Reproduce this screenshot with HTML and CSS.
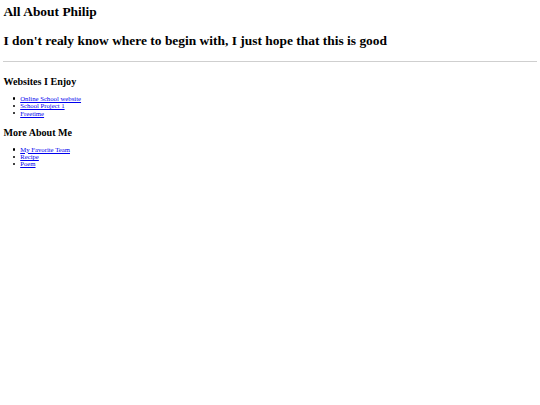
FILE: index.html
```html
<!DOCTYPE html>
<html>
<head>
<meta charset="utf-8">
<link rel="stylesheet" href="styles.css">
</head>
<body class="page">
<h1 class="title title-first">All About Philip</h1>
<h1 class="title title-second">I don't realy know where to begin with, I just hope that this is good</h1>
<hr class="rule">
<h2 class="section">Websites I Enjoy</h2>
<ul class="links">
<li class="item"><a href="#">Online School website</a></li>
<li class="item"><a href="#">School Project 1</a></li>
<li class="item"><a href="#">Freetime</a></li>
</ul>
<h2 class="section">More About Me</h2>
<ul class="links">
<li class="item"><a href="#">My Favorite Team</a></li>
<li class="item"><a href="#">Recipe</a></li>
<li class="item"><a href="#">Poem</a></li>
</ul>
</body>
</html>
```
FILE: styles.css
```css
html { background: #fff; }
.page {
  margin: 0 3.4px;
  font-family: "Liberation Serif", "Times New Roman", serif;
  font-size: 6.72px;
  color: #000;
}
.title {
  font-size: 13.44px;
  line-height: 15.44px;
  font-weight: bold;
}
.title-first { margin: 3.75px 0 14.26px; }
.title-second { margin: 0 0 11.8px; }
.rule {
  margin: 0 0 14px;
  border: none;
  border-top: 1px solid #cfcfcf;
  height: 0;
}
.section {
  font-size: 10.08px;
  line-height: 11.58px;
  font-weight: bold;
  margin: 0 0 7.6px;
}
.links {
  margin: 0 0 9.7px;
  padding-left: 16.8px;
  line-height: 7.35px;
  list-style: none;
}
.item { position: relative; }
.item::before {
  content: "";
  position: absolute;
  left: -7.6px;
  top: 2.6px;
  width: 2.2px;
  height: 2.2px;
  border-radius: 50%;
  background: #000;
}
.links a { color: #0000ee; }
```
